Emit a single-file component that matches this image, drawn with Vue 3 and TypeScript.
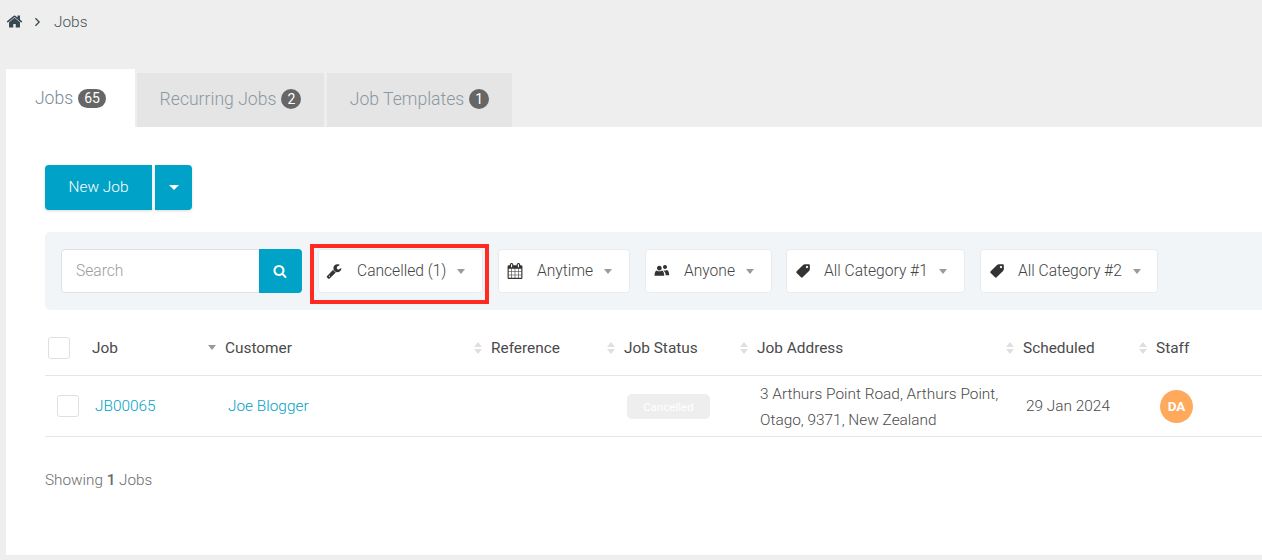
<script setup lang="ts">
const paths: Record<string, string> = {
  home: 'M1472 992v480q0 26-19 45t-45 19h-384v-384h-256v384h-384q-26 0-45-19t-19-45v-480q0-1 .5-3t.5-3l575-474 575 474q1 2 1 6zm223-69l-62 74q-8 9-21 11h-3q-13 0-21-7l-692-577-692 577q-12 8-24 7-13-2-21-11l-62-74q-8-10-7-23.500t11-21.500l719-599q32-26 76-26t76 26l244 204v-195q0-14 9-23t23-9h192q14 0 23 9t9 23v408l219 182q10 8 11 21.500t-7 23.500z',
  wrench: 'M448 1472q0-26-19-45t-45-19-45 19-19 45 19 45 45 19 45-19 19-45zm644-420l-682 682q-37 37-90 37-52 0-91-37l-106-108q-38-36-38-90 0-53 38-91l681-681q39 98 114.500 173.500t173.500 114.500zm634-435q0 39-23 106-47 134-164.500 217.500t-258.500 83.500q-185 0-316.500-131.500t-131.500-316.500 131.500-316.500 316.500-131.500q58 0 121.500 16.500t107.500 46.500q16 11 16 28t-16 28l-293 169v224l193 107q5-3 79-48.500t135.500-81 70.500-35.500q15 0 23.500 10t8.500 25z',
  calendar: 'M192 1664h288v-288h-288v288zm352 0h320v-288h-320v288zm-352-352h288v-320h-288v320zm352 0h320v-320h-320v320zm-352-384h288v-288h-288v288zm736 736h320v-288h-320v288zm-384-736h320v-288h-320v288zm768 736h288v-288h-288v288zm-384-352h320v-320h-320v320zm-352-864v-288q0-13-9.500-22.500t-22.500-9.500h-64q-13 0-22.500 9.500t-9.500 22.500v288q0 13 9.500 22.500t22.500 9.500h64q13 0 22.500-9.500t9.500-22.500zm736 864h288v-320h-288v320zm-384-384h320v-288h-320v288zm384 0h288v-288h-288v288zm32-480v-288q0-13-9.500-22.500t-22.500-9.500h-64q-13 0-22.500 9.500t-9.500 22.500v288q0 13 9.500 22.500t22.500 9.500h64q13 0 22.500-9.500t9.500-22.500zm384-64v1280q0 52-38 90t-90 38h-1408q-52 0-90-38t-38-90v-1280q0-52 38-90t90-38h128v-96q0-66 47-113t113-47h64q66 0 113 47t47 113v96h384v-96q0-66 47-113t113-47h64q66 0 113 47t47 113v96h128q52 0 90 38t38 90z',
  users: 'M640 260a290 290 0 1 0 1 0zM60 1480q0-560 270-650 130 110 310 110t310-110q270 90 270 650zM1320 180a240 240 0 1 0 1 0zM1130 800q110 50 190 50 110 0 210-70 270 70 300 620h-430q-10-340-270-600z',
  tag: 'M576 448q0-53-37.500-90.500t-90.500-37.500-90.500 37.500-37.500 90.500 37.500 90.500 90.500 37.500 90.500-37.500 37.500-90.500zm1067 576q0 53-37 90l-491 492q-39 37-91 37-53 0-90-37l-715-716q-38-37-64.500-101t-26.500-117v-416q0-52 38-90t90-38h416q53 0 117 26.500t102 64.500l715 714q37 39 37 91z',
  search: 'M1216 832q0-185-131.500-316.500t-316.500-131.500-316.500 131.500-131.500 316.500 131.500 316.500 316.500 131.500 316.500-131.500 131.500-316.500zm512 832q0 52-38 90t-90 38q-54 0-90-38l-343-342q-179 124-399 124-143 0-273.500-55.500t-225-150-150-225-55.500-273.500 55.500-273.500 150-225 225-150 273.500-55.500 273.500 55.500 225 150 150 225 55.500 273.500q0 220-124 399l343 343q37 37 37 90z'
}

interface Tab { label: string; count: number; active?: boolean }
const tabs: Tab[] = [
  { label: 'Jobs', count: 65, active: true },
  { label: 'Recurring Jobs', count: 2 },
  { label: 'Job Templates', count: 1 }
]

interface Filter { icon: string; label: string; width: number; flip?: boolean; marked?: boolean }
const filters: Filter[] = [
  { icon: 'wrench', label: 'Cancelled (1)', width: 165, marked: true },
  { icon: 'calendar', label: 'Anytime', width: 132 },
  { icon: 'users', label: 'Anyone', width: 127 },
  { icon: 'tag', label: 'All Category #1', width: 179, flip: true },
  { icon: 'tag', label: 'All Category #2', width: 178, flip: true }
]

const columns = ['Customer', 'Reference', 'Job Status', 'Job Address', 'Scheduled']
</script>

<template>
  <div class="page">
    <nav class="crumbs">
      <svg class="home" viewBox="0 0 1792 1792"><path :d="paths.home" /></svg>
      <svg class="chev" viewBox="0 0 8 12"><path d="M1.500 1.500 6 6l-4.500 4.500" /></svg>
      <span>Jobs</span>
    </nav>

    <div class="tabs">
      <div v-for="t in tabs" :key="t.label" class="tab" :class="{ active: t.active }">
        {{ t.label }} <span class="count">{{ t.count }}</span>
      </div>
    </div>

    <main class="panel">
      <div class="actions">
        <button class="btn primary">New Job</button>
        <button class="btn caret-btn"><span class="caret" /></button>
      </div>

      <section class="filters">
        <div class="search">
          <span class="placeholder">Search</span>
          <span class="search-btn">
            <svg viewBox="0 0 1792 1792"><path :d="paths.search" /></svg>
          </span>
        </div>
        <div
          v-for="f in filters"
          :key="f.label"
          class="filter"
          :class="{ marked: f.marked }"
          :style="{ width: f.width + 'px' }"
        >
          <svg
            class="f-icon"
            :class="[{ flip: f.flip }, 'i-' + f.icon]"
            :viewBox="f.icon === 'users' ? '0 0 1920 1792' : '0 0 1792 1792'"
          ><path :d="paths[f.icon]" /></svg>
          <span class="f-label">{{ f.label }}</span>
          <span class="f-caret" />
          <span v-if="f.marked" class="highlight" />
        </div>
      </section>

      <div class="row head">
        <div class="cell-check"><span class="check" /></div>
        <div class="th">
          <span>Job</span>
          <span class="sort"><i class="up hidden" /><i class="down dark" /></span>
        </div>
        <div v-for="c in columns" :key="c" class="th">
          <span>{{ c }}</span>
          <span class="sort"><i class="up" /><i class="down" /></span>
        </div>
        <div class="th"><span>Staff</span></div>
      </div>

      <div class="row body">
        <div class="cell-check body-check"><span class="check" /></div>
        <div class="td"><a class="link">JB00065</a></div>
        <div class="td"><a class="link">Joe Blogger</a></div>
        <div class="td"></div>
        <div class="td"><span class="status">Cancelled</span></div>
        <div class="td address">3 Arthurs Point Road, Arthurs Point,<br />Otago, 9371, New Zealand</div>
        <div class="td">29 Jan 2024</div>
        <div class="td"><span class="avatar">DA</span></div>
      </div>

      <p class="showing">Showing <b>1</b> Jobs</p>
    </main>
  </div>
</template>

<style>
html, body { margin: 0; background: #eeeeee; overflow: hidden; }
</style>

<style scoped>
.page {
  height: 560px;
  background: #eeeeee;
  font-family: Roboto, "Liberation Sans", sans-serif;
  font-weight: 300;
  font-size: 15.400px;
  color: #3d4043;
  box-sizing: border-box;
  padding-top: 13px;
  overflow: hidden;
}
.crumbs {
  display: flex;
  align-items: center;
  height: 17px;
  padding-left: 6px;
  margin-bottom: 39px;
  color: #4a5258;
}
.home { width: 17px; height: 17px; fill: #37474f; margin-top: -1px; }
.chev { width: 7px; height: 10px; margin-left: 11px; margin-right: 13px; fill: none; stroke: #37474f; stroke-width: 1.500; }
.tabs {
  display: flex;
  align-items: flex-end;
  padding-left: 6px;
  height: 58px;
}
.tab {
  box-sizing: border-box;
  height: 54px;
  width: 187px;
  margin-right: 3px;
  background: #e5e5e5;
  color: #8c98a2;
  font-size: 17.600px;
  display: flex;
  align-items: center;
  justify-content: center;
  gap: 5px;
  padding-bottom: 2px;
}
.tab:nth-child(3) { width: 185px; }
.tab.active {
  height: 58px;
  width: 129px;
  margin-right: 2px;
  background: #fff;
  color: #7c8a96;
  padding-bottom: 0;
}
.count {
  background: #666666;
  color: #fff;
  font-size: 14px;
  font-weight: 400;
  min-width: 20px;
  height: 20px;
  border-radius: 10px;
  display: inline-flex;
  align-items: center;
  justify-content: center;
  box-sizing: border-box;
  padding: 0 3px;
}
.active .count { min-width: 28px; height: 19px; }
.panel {
  margin-left: 6px;
  height: 428px;
  background: #fff;
  box-sizing: border-box;
  padding: 38px 0 0 39px;
}
.actions { display: flex; gap: 3px; height: 45px; margin-bottom: 22px; }
.btn {
  border: 0;
  background: #00a2c7;
  color: #fff;
  font: inherit;
  font-size: 15.400px;
  font-weight: 300;
  height: 45px;
  padding: 0;
  box-shadow: 0 1px 3px rgba(0, 0, 0, .15);
}
.primary { width: 107px; border-radius: 4px 0 0 4px; padding-bottom: 2px; }
.caret-btn { width: 37px; border-radius: 0 4px 4px 0; display: flex; align-items: center; justify-content: center; }
.caret { border: 5px solid transparent; border-top-color: #fff; border-bottom-width: 0; }
.filters {
  display: flex;
  align-items: center;
  box-sizing: border-box;
  height: 78px;
  background: #f2f5f8;
  border-radius: 5px 0 0 5px;
  padding-left: 16px;
}
.search {
  width: 241px;
  height: 44px;
  box-sizing: border-box;
  background: #fff;
  border: 1px solid #dde1e5;
  border-radius: 4px;
  display: flex;
  align-items: center;
  justify-content: space-between;
  margin-right: 16px;
}
.placeholder { color: #9b9b9b; padding-left: 14px; font-size: 15.600px; }
.search-btn {
  width: 43px;
  height: 44px;
  margin: 0 -1px 0 0;
  background: #00a2c7;
  border-radius: 0 4px 4px 0;
  display: flex;
  align-items: center;
  justify-content: center;
  padding-right: 2px;
  box-sizing: border-box;
}
.search-btn svg { width: 14px; height: 14px; fill: #fff; }
.filter {
  position: relative;
  box-sizing: border-box;
  height: 44px;
  background: #fff;
  border: 1px solid #e8ecef;
  border-radius: 4px;
  display: flex;
  align-items: center;
  padding-left: 8px;
  margin-right: 15px;
  color: #444;
  white-space: nowrap;
  font-size: 15.600px;
}
.filter:nth-child(4) { margin-right: 14px; }
.f-icon { width: 16px; height: 16px; fill: #333; flex: none; margin-right: 13px; }
.i-calendar { margin-right: 14px; }
.i-users { margin-right: 14px; }
.i-wrench { margin-right: 15px; }
.flip { transform: scaleX(-1); }
.f-caret {
  margin-left: 11px;
  border: 4.500px solid transparent;
  border-top: 5px solid #9b9b9b;
  border-bottom-width: 0;
}
.highlight {
  position: absolute;
  left: -9px;
  top: -6px;
  width: 179px;
  height: 60px;
  box-sizing: border-box;
  border: 4px solid #ff2a22;
  pointer-events: none;
}
.marked { padding-left: 7px; }
.row {
  display: grid;
  grid-template-columns: 47px 133px 266px 133px 133px 266px 133px 1fr;
  align-items: center;
  box-sizing: border-box;
  border-bottom: 1px solid #e2e5ea;
}
.head { height: 66px; padding-top: 10px; font-weight: 400; color: #4a4a4a; }
.body { height: 61px; }
.th {
  display: flex;
  align-items: center;
  justify-content: space-between;
  padding-right: 9px;
  font-weight: 400;
  font-size: 15.400px;
}
.td { padding-left: 3px; line-height: 29px; color: #4a4a4a; }
.address { line-height: 26px; padding-top: 1px; }
.check {
  display: block;
  width: 22px;
  height: 22px;
  box-sizing: border-box;
  border: 1px solid #dde1e5;
  border-radius: 3px;
  margin-left: 3px;
  background: #fff;
}
.body-check .check { margin-left: 12px; }
.sort { display: flex; flex-direction: column; gap: 2px; width: 9px; align-items: center; }
.sort i { display: block; border: 4px solid transparent; }
.sort .up { border-top-width: 0; border-bottom: 5px solid #dfdfdf; }
.sort .down { border-bottom-width: 0; border-top: 5px solid #dfdfdf; }
.sort .hidden { visibility: hidden; height: 0; }
.sort .down.dark { border-top-color: #9a9a9a; margin-top: -8px; }
.link { color: #00a2c7; }
.status {
  display: block;
  width: 83px;
  height: 25px;
  line-height: 26px;
  background: #eeeeee;
  border-radius: 5px;
  color: #fff;
  font-size: 11.500px;
  font-weight: 400;
  text-align: center;
}
.avatar {
  display: flex;
  width: 33px;
  height: 33px;
  border-radius: 50%;
  background: #ffa95c;
  color: #fff;
  font-weight: 700;
  font-size: 13.500px;
  align-items: center;
  justify-content: center;
  margin-left: 1px;
}
.showing { margin: 35px 0 0; color: #6b6b6b; line-height: 17px; font-size: 15.300px; }
.showing b { font-weight: 500; }
</style>
